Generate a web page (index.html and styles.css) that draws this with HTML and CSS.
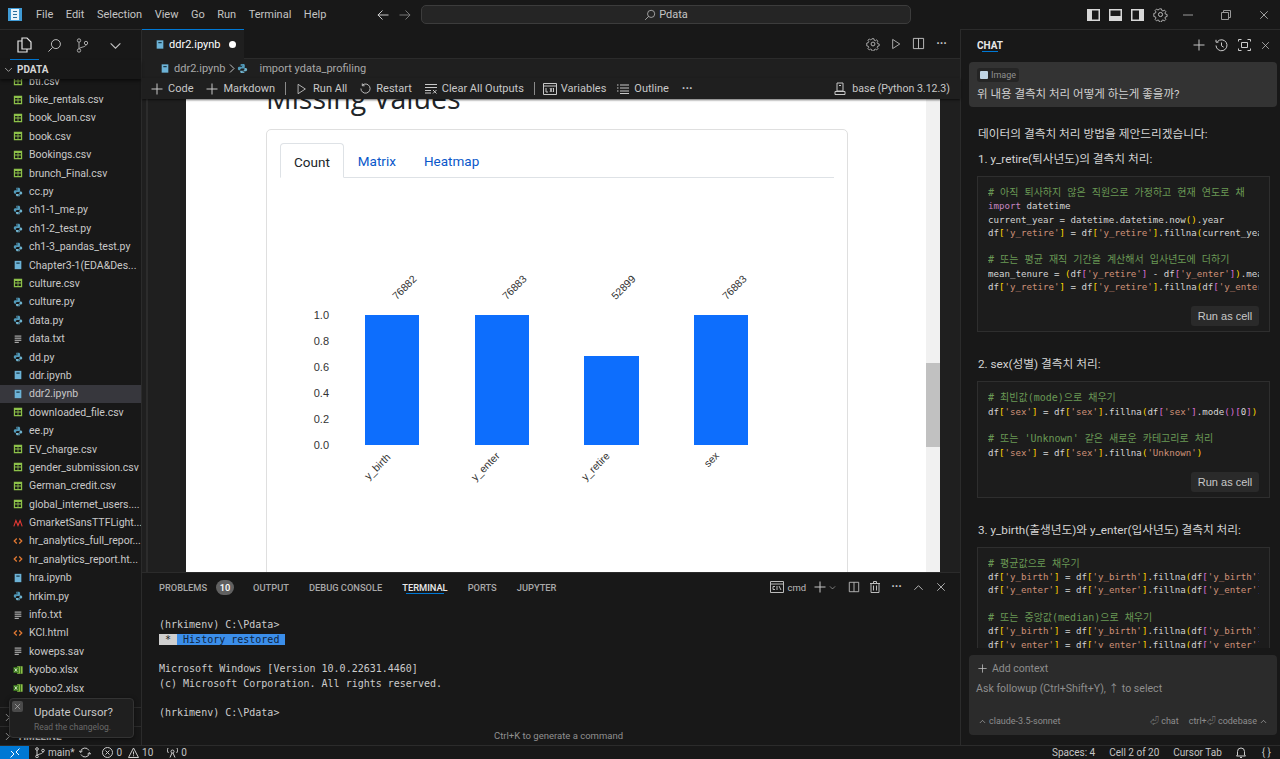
FILE: index.html
```html
<!DOCTYPE html>
<html>
<head>
<meta charset="utf-8">
<title>ddr2.ipynb - Pdata</title>
<link rel="stylesheet" href="styles.css">
</head>
<body>
<svg class="defs" width="0" height="0">
	<symbol id="csv" viewBox="0 0 12 12"><path fill="#8dc149" fill-rule="evenodd" d="M1 1h10v10H1zM2.500 3.500v2h3v-2zM6.500 3.500v2h3v-2zM2.500 6.500v3h3v-3zM6.500 6.500v3h3v-3z"/></symbol>
	<symbol id="py" viewBox="0 0 12 12"><path fill="#519aba" d="M4 1h3.500L8.500 2v3l-1 1H4.500l-1 1v1H2L1 7V5l1-1h3.500v-.6H4zM5 1.800v.8h.8v-.8z"/><path fill="#6fb3cf" d="M8 11H4.500l-1-1V8.500h3.500l1-1V5.500H10l1 1v1.500l-1 1H6.500v.6H8zM7 10.200v-.8h-.8v.8z"/></symbol>
	<symbol id="nb" viewBox="0 0 12 12"><path fill="#6cb2d6" d="M2 1h8v10H2z"/><path fill="#1a3a4a" d="M4 3h4v1.500H4z"/></symbol>
	<symbol id="txt" viewBox="0 0 12 12"><path stroke="#c5c5c5" stroke-width="1.200" d="M2 2.500h8M2 5h8M2 7.500h8M2 10h5" fill="none"/></symbol>
	<symbol id="html" viewBox="0 0 12 12"><path stroke="#e37933" stroke-width="1.500" d="M4.500 3 1.500 6l3 3M7.500 3l3 3-3 3" fill="none"/></symbol>
	<symbol id="xls" viewBox="0 0 12 12"><path fill="#8dc149" d="M5 1.500h6.500v9H5z"/><path fill="#3c7a1e" d="M.5 2.500h6.500v7H.5z"/><path stroke="#e8f5d8" d="m2 4 3 4M5 4 2 8" fill="none"/><path stroke="#2d5c16" d="M9 1.500v9" fill="none"/></symbol>
	<symbol id="font" viewBox="0 0 12 12"><path stroke="#e53935" stroke-width="1.300" d="M1 10 3.500 3 6 9l2.500-6 2.500 7" fill="none"/></symbol>
	<symbol id="plus" viewBox="0 0 12 12"><path stroke="currentColor" d="M6 .5v11M.5 6h11" fill="none"/></symbol>
	<symbol id="close" viewBox="0 0 12 12"><path stroke="currentColor" d="m1.500 1.500 9 9M10.500 1.500l-9 9" fill="none"/></symbol>
	<symbol id="down" viewBox="0 0 12 12"><path stroke="currentColor" d="m1.500 4 4.500 4.500L10.500 4" fill="none"/></symbol>
	<symbol id="up" viewBox="0 0 12 12"><path stroke="currentColor" d="M1.500 8.500 6 4l4.500 4.500" fill="none"/></symbol>
	<symbol id="right" viewBox="0 0 12 12"><path stroke="currentColor" d="m4 1.500 4.500 4.500L4 10.500" fill="none"/></symbol>
	<symbol id="gear" viewBox="0 0 16 16"><g stroke="currentColor" fill="none"><circle cx="8" cy="8" r="2.200"/><path d="M6.800 1.500h2.400l.4 1.900 1.300.6 1.700-1 1.600 1.600-1 1.700.6 1.300 1.900.4v2.400l-1.900.4-.6 1.300 1 1.700-1.600 1.600-1.700-1-1.300.6-.4 1.900H6.800l-.4-1.900-1.300-.6-1.700 1-1.600-1.600 1-1.700-.6-1.300-1.900-.4V6.800l1.900-.4.6-1.300-1-1.700 1.600-1.600 1.700 1 1.300-.6z" transform="translate(.6 .6) scale(.92)"/></g></symbol>
	<symbol id="split" viewBox="0 0 14 14"><path stroke="currentColor" d="M1.500 1.500h11v11h-11zM7 1.500v11" fill="none"/></symbol>
	<symbol id="search" viewBox="0 0 16 16"><circle cx="9.500" cy="6.500" r="4.800" stroke="currentColor" fill="none"/><path stroke="currentColor" d="M6 10 1.500 14.500" fill="none"/></symbol>
	<symbol id="play" viewBox="0 0 12 14"><path stroke="currentColor" d="M2 1.500 10.500 7 2 12.500z" fill="none"/></symbol>
</svg>

<div class="app">
	<div class="titlebar">
		<svg class="logo" width="14" height="13" viewBox="0 0 14 13"><path fill="#3f9bd6" d="M0 0h14v13H0z"/><path fill="#e8f3fa" d="M3 1h8v11H3z"/><path fill="#2a6f9e" d="M5 3h4v1H5zM5 6h4v1H5zM5 9h4v1H5z"/></svg>
		<div class="menu">
			<span>File</span><span>Edit</span><span>Selection</span><span>View</span><span>Go</span><span>Run</span><span>Terminal</span><span>Help</span>
		</div>
		<div class="nav">
			<svg width="12" height="12" viewBox="0 0 12 12"><path stroke="#c8c8c8" d="M11.500 6H.8M5.500 1.500 1 6l4.500 4.500" fill="none"/></svg>
			<svg width="12" height="12" viewBox="0 0 12 12"><path stroke="#777" d="M.5 6h10.700M6.500 1.500 11 6l-4.500 4.500" fill="none"/></svg>
		</div>
		<div class="search-box">
			<svg class="ico" width="12" height="12"><use href="#search"/></svg>
			<span>Pdata</span>
		</div>
		<div class="layout-icons">
			<svg width="13" height="12" viewBox="0 0 13 12"><path fill="#d8d8d8" d="M0 0h13v12H0z"/><path fill="#1a1a1a" d="M5 1.500h6.500v9H5z"/></svg>
			<svg width="13" height="12" viewBox="0 0 13 12"><path fill="#d8d8d8" d="M0 0h13v12H0z"/><path fill="#1a1a1a" d="M1.500 1.500h10V7h-10z"/></svg>
			<svg width="13" height="12" viewBox="0 0 13 12"><path fill="#d8d8d8" d="M0 0h13v12H0z"/><path fill="#1a1a1a" d="M1.500 1.500H8v9H1.500z"/></svg>
			<svg class="ico" width="15" height="15"><use href="#gear"/></svg>
		</div>
		<div class="win-buttons">
			<svg width="10" height="10" viewBox="0 0 10 10"><path stroke="#999" d="M0 5h10" fill="none"/></svg>
			<svg width="10" height="10" viewBox="0 0 10 10"><path stroke="#999" d="M.5 2.500h7v7h-7zM2.500 2.500v-2h7v7h-2" fill="none"/></svg>
			<svg class="win-x" width="10" height="10"><use href="#close"/></svg>
		</div>
	</div>

	<div class="main">
		<div class="sidebar">
			<div class="side-tabs">
				<span class="side-active"><svg width="15" height="16" viewBox="0 0 15 16"><path stroke="#e6e6e6" stroke-width="1.200" d="M5 1h5l4 4v7H5zM5 4H1v11h9v-3" fill="none"/></svg></span>
				<svg class="ico" width="15" height="15"><use href="#search"/></svg>
				<svg width="13" height="15" viewBox="0 0 13 15"><g stroke="#aaa" fill="none"><circle cx="3" cy="2.500" r="1.700"/><circle cx="3" cy="12.500" r="1.700"/><circle cx="10" cy="5" r="1.700"/><path d="M3 4.200v6.600M10 6.700c0 2.500-5 2-7 4"/></g></svg>
				<svg class="ico side-more" width="13" height="13"><use href="#down"/></svg>
			</div>
			<div class="explorer-head"><svg class="ico" width="9" height="9"><use href="#down"/></svg><b>PDATA</b></div>
			<div class="tree">
				<ul class="files">
					<li><svg><use href="#csv"/></svg>bti.csv</li>
					<li><svg><use href="#csv"/></svg>bike_rentals.csv</li>
					<li><svg><use href="#csv"/></svg>book_loan.csv</li>
					<li><svg><use href="#csv"/></svg>book.csv</li>
					<li><svg><use href="#csv"/></svg>Bookings.csv</li>
					<li><svg><use href="#csv"/></svg>brunch_Final.csv</li>
					<li><svg><use href="#py"/></svg>cc.py</li>
					<li><svg><use href="#py"/></svg>ch1-1_me.py</li>
					<li><svg><use href="#py"/></svg>ch1-2_test.py</li>
					<li><svg><use href="#py"/></svg>ch1-3_pandas_test.py</li>
					<li><svg><use href="#nb"/></svg>Chapter3-1(EDA&amp;Des...</li>
					<li><svg><use href="#csv"/></svg>culture.csv</li>
					<li><svg><use href="#py"/></svg>culture.py</li>
					<li><svg><use href="#py"/></svg>data.py</li>
					<li><svg><use href="#txt"/></svg>data.txt</li>
					<li><svg><use href="#py"/></svg>dd.py</li>
					<li><svg><use href="#nb"/></svg>ddr.ipynb</li>
					<li class="selected"><svg><use href="#nb"/></svg>ddr2.ipynb</li>
					<li><svg><use href="#csv"/></svg>downloaded_file.csv</li>
					<li><svg><use href="#py"/></svg>ee.py</li>
					<li><svg><use href="#csv"/></svg>EV_charge.csv</li>
					<li><svg><use href="#csv"/></svg>gender_submission.csv</li>
					<li><svg><use href="#csv"/></svg>German_credit.csv</li>
					<li><svg><use href="#csv"/></svg>global_internet_users....</li>
					<li><svg><use href="#font"/></svg>GmarketSansTTFLight...</li>
					<li><svg><use href="#html"/></svg>hr_analytics_full_repor...</li>
					<li><svg><use href="#html"/></svg>hr_analytics_report.ht...</li>
					<li><svg><use href="#nb"/></svg>hra.ipynb</li>
					<li><svg><use href="#py"/></svg>hrkim.py</li>
					<li><svg><use href="#txt"/></svg>info.txt</li>
					<li><svg><use href="#html"/></svg>KCl.html</li>
					<li><svg><use href="#txt"/></svg>koweps.sav</li>
					<li><svg><use href="#xls"/></svg>kyobo.xlsx</li>
					<li><svg><use href="#xls"/></svg>kyobo2.xlsx</li>
				</ul>
			</div>
			<div class="side-section"><svg class="ico" width="9" height="9"><use href="#right"/></svg>OUTLINE</div>
			<div class="side-section"><svg class="ico" width="9" height="9"><use href="#right"/></svg>TIMELINE</div>
		</div>

		<div class="editor">
			<div class="tabbar">
				<div class="tab">
					<svg width="10" height="11"><use href="#nb"/></svg>
					<span>ddr2.ipynb</span>
					<i class="dirty"></i>
				</div>
				<div class="tab-actions">
					<svg class="ico" width="14" height="14"><use href="#gear"/></svg>
					<svg class="ico" width="10" height="12"><use href="#play"/></svg>
					<svg class="ico" width="13" height="13"><use href="#split"/></svg>
					<span class="dots">···</span>
				</div>
			</div>
			<div class="breadcrumb">
				<svg width="10" height="11"><use href="#nb"/></svg>
				<span>ddr2.ipynb</span>
				<svg class="ico crumb-sep" width="6" height="9" viewBox="0 0 6 9"><path stroke="currentColor" d="m1 .5 4 4-4 4" fill="none"/></svg>
				<svg class="crumb-py" width="11" height="11"><use href="#py"/></svg>
				<span>import ydata_profiling</span>
			</div>
			<div class="toolbar">
				<span class="tool tool-code"><svg width="12" height="12"><use href="#plus"/></svg>Code</span>
				<span class="tool tool-md"><svg width="12" height="12"><use href="#plus"/></svg>Markdown</span>
				<i class="tool-sep"></i>
				<span class="tool tool-run"><svg width="11" height="12"><use href="#play"/></svg>Run All</span>
				<span class="tool tool-restart"><svg width="11" height="11" viewBox="0 0 12 12"><path stroke="currentColor" d="M2.500 2.500A5 5 0 1 1 1 6M2.500.5v2.500H5" fill="none"/></svg>Restart</span>
				<span class="tool tool-clear"><svg width="12" height="11" viewBox="0 0 12 11"><path stroke="currentColor" d="M0 1.500h12M0 4.500h12M0 7.500h6M0 10h6M8 7l3.500 3.500M11.500 7 8 10.500" fill="none"/></svg>Clear All Outputs</span>
				<i class="tool-sep tool-sep2"></i>
				<span class="tool tool-vars"><svg width="14" height="12" viewBox="0 0 14 12"><path stroke="currentColor" d="M.5.500h13v11H.5zM.5 3h13" fill="none"/><path stroke="currentColor" d="M3 5v4h2M7 5l2 4M9 5 7 9M10.500 5v4" fill="none"/></svg>Variables</span>
				<span class="tool tool-outline"><svg width="12" height="10" viewBox="0 0 12 10"><path stroke="currentColor" d="M3 1h9M3 4h9M3 7h9M3 9.500h9M0 1h1.500M0 4h1.500M0 7h1.500" fill="none"/></svg>Outline</span>
				<span class="dots">···</span>
				<span class="kernel"><svg width="12" height="13" viewBox="0 0 12 13"><path stroke="currentColor" fill="none" d="M3 1h6v8H3zM1 12.500h10v-3H1zM5 3.500h2"/></svg>base (Python 3.12.3)</span>
			</div>
			<div class="notebook">
				<div class="gutter"></div>
				<div class="output">
					<div class="report">
						<h1>Missing Values</h1>
						<div class="card">
							<div class="card-tabs">
								<a class="on">Count</a>
								<a>Matrix</a>
								<a>Heatmap</a>
							</div>
							<svg class="chart" width="580" height="400">
								<g fill="#0d6efd">
									<rect x="98" y="137" width="54" height="130"/>
									<rect x="208" y="137" width="54" height="130"/>
									<rect x="317" y="178" width="55" height="89"/>
									<rect x="427" y="137" width="54" height="130"/>
								</g>
								<g class="ticks">
									<text x="62" y="141">1.0</text>
									<text x="62" y="167">0.8</text>
									<text x="62" y="193">0.6</text>
									<text x="62" y="219">0.4</text>
									<text x="62" y="245">0.2</text>
									<text x="62" y="271">0.0</text>
								</g>
								<g class="bar-labels">
									<text transform="translate(140 112) rotate(-45)">76882</text>
									<text transform="translate(250 112) rotate(-45)">76883</text>
									<text transform="translate(359 112) rotate(-45)">52899</text>
									<text transform="translate(470 112) rotate(-45)">76883</text>
									<text transform="translate(113 291) rotate(-45)">y_birth</text>
									<text transform="translate(221 291) rotate(-45)">y_enter</text>
									<text transform="translate(331 291) rotate(-45)">y_retire</text>
									<text transform="translate(447 284) rotate(-45)">sex</text>
								</g>
							</svg>
						</div>
					</div>
					<div class="scrollbar"><div class="thumb"></div></div>
				</div>
				<div class="right-gap"></div>
			</div>
			<div class="panel">
				<div class="panel-tabs">
					<span>PROBLEMS</span><em class="badge">10</em>
					<span class="pt-output">OUTPUT</span>
					<span>DEBUG CONSOLE</span>
					<span class="on">TERMINAL</span>
					<span>PORTS</span>
					<span>JUPYTER</span>
					<div class="panel-actions">
						<svg width="14" height="12" viewBox="0 0 14 12"><path stroke="#bbb" d="M.5.500h13v11H.5zM.5 3h13" fill="none"/><path stroke="#bbb" d="M5 5.500H3v3h2M7 5v4M9 5l2 4" fill="none"/></svg>
						<span class="cmd">cmd</span>
						<svg class="ico pa-plus" width="12" height="12"><use href="#plus"/></svg>
						<svg class="ico pa-down" width="7" height="7"><use href="#down"/></svg>
						<svg class="ico pa-split" width="12" height="12"><use href="#split"/></svg>
						<svg class="pa-trash" width="10" height="12" viewBox="0 0 10 12"><path stroke="#bbb" fill="none" d="M1 2.500h8v9H1zM0 2.500h10M3.500 2.500V.5h3v2M3.500 4.500v5M6.500 4.500v5"/></svg>
						<span class="dots pa-dots">···</span>
						<svg class="ico pa-up" width="11" height="11"><use href="#up"/></svg>
						<svg class="ico pa-x" width="10" height="10"><use href="#close"/></svg>
					</div>
				</div>
				<pre class="terminal">(hrkimenv) C:\Pdata&gt;
<span class="restored"><span class="star"> * </span><span class="hist"> History restored </span></span>

Microsoft Windows [Version 10.0.22631.4460]
(c) Microsoft Corporation. All rights reserved.

(hrkimenv) C:\Pdata&gt;</pre>
				<div class="term-hint">Ctrl+K to generate a command</div>
			</div>
		</div>

		<div class="chat">
			<div class="chat-head">
				<span class="chat-title">CHAT</span>
				<div class="chat-actions">
					<svg class="ico" width="12" height="12"><use href="#plus"/></svg>
					<svg width="13" height="13" viewBox="0 0 13 13"><path stroke="#ccc" fill="none" d="M2.500 2.500a5.500 5.500 0 1 1-1.500 4M1 .8v2.400h2.400M6.500 3.500v3.300l2.200 1.400"/></svg>
					<svg width="13" height="12" viewBox="0 0 13 12"><path stroke="#ccc" fill="none" d="M3.500 3.500h6v5h-6zM.5 2.500v-2h3M9.500.5h3v2M.5 9.500v2h3M9.500 11.500h3v-2"/></svg>
					<svg class="ico" width="9" height="9"><use href="#close"/></svg>
				</div>
			</div>
			<div class="chat-scroll">
				<div class="user-msg">
					<span class="chip"><i></i>Image</span>
					<p>위 내용 결측치 처리 어떻게 하는게 좋을까?</p>
				</div>
				<p class="para intro">데이터의 결측치 처리 방법을 제안드리겠습니다:</p>
				<p class="para">1. y_retire(퇴사년도)의 결측치 처리:</p>
				<div class="code">
<pre><span class="c"># 아직 퇴사하지 않은 직원으로 가정하고 현재 연도로 채</span>
<span class="k">import</span> datetime
current_year = datetime.datetime.now<span class="b">()</span>.year
df<span class="b">[</span><span class="s">'y_retire'</span><span class="b">]</span> = df<span class="b">[</span><span class="s">'y_retire'</span><span class="b">]</span>.fillna<span class="b">(</span>current_year<span class="b">)</span>

<span class="c"># 또는 평균 재직 기간을 계산해서 입사년도에 더하기</span>
mean_tenure = <span class="b">(</span>df<span class="p">[</span><span class="s">'y_retire'</span><span class="p">]</span> - df<span class="p">[</span><span class="s">'y_enter'</span><span class="p">]</span><span class="b">)</span>.mean<span class="b">()</span>
df<span class="b">[</span><span class="s">'y_retire'</span><span class="b">]</span> = df<span class="b">[</span><span class="s">'y_retire'</span><span class="b">]</span>.fillna<span class="b">(</span>df<span class="p">[</span><span class="s">'y_enter'</span><span class="p">]</span><span class="b">)</span></pre>
					<button class="run-cell">Run as cell</button>
				</div>
				<p class="para after-code">2. sex(성별) 결측치 처리:</p>
				<div class="code">
<pre><span class="c"># 최빈값(mode)으로 채우기</span>
df<span class="b">[</span><span class="s">'sex'</span><span class="b">]</span> = df<span class="b">[</span><span class="s">'sex'</span><span class="b">]</span>.fillna<span class="b">(</span>df<span class="p">[</span><span class="s">'sex'</span><span class="p">]</span>.mode<span class="p">()[</span>0<span class="p">]</span><span class="b">)</span>

<span class="c"># 또는 'Unknown' 같은 새로운 카테고리로 처리</span>
df<span class="b">[</span><span class="s">'sex'</span><span class="b">]</span> = df<span class="b">[</span><span class="s">'sex'</span><span class="b">]</span>.fillna<span class="b">(</span><span class="s">'Unknown'</span><span class="b">)</span></pre>
					<button class="run-cell">Run as cell</button>
				</div>
				<p class="para after-code">3. y_birth(출생년도)와 y_enter(입사년도) 결측치 처리:</p>
				<div class="code">
<pre><span class="c"># 평균값으로 채우기</span>
df<span class="b">[</span><span class="s">'y_birth'</span><span class="b">]</span> = df<span class="b">[</span><span class="s">'y_birth'</span><span class="b">]</span>.fillna<span class="b">(</span>df<span class="p">[</span><span class="s">'y_birth'</span><span class="p">]</span><span class="b">)</span>
df<span class="b">[</span><span class="s">'y_enter'</span><span class="b">]</span> = df<span class="b">[</span><span class="s">'y_enter'</span><span class="b">]</span>.fillna<span class="b">(</span>df<span class="p">[</span><span class="s">'y_enter'</span><span class="p">]</span><span class="b">)</span>

<span class="c"># 또는 중앙값(median)으로 채우기</span>
df<span class="b">[</span><span class="s">'y_birth'</span><span class="b">]</span> = df<span class="b">[</span><span class="s">'y_birth'</span><span class="b">]</span>.fillna<span class="b">(</span>df<span class="p">[</span><span class="s">'y_birth'</span><span class="p">]</span><span class="b">)</span>
df<span class="b">[</span><span class="s">'y_enter'</span><span class="b">]</span> = df<span class="b">[</span><span class="s">'y_enter'</span><span class="b">]</span>.fillna<span class="b">(</span>df<span class="p">[</span><span class="s">'y_enter'</span><span class="p">]</span><span class="b">)</span></pre>
				</div>
			</div>
			<div class="chat-input">
				<div class="add-context"><svg class="ico" width="9" height="9"><use href="#plus"/></svg>Add context</div>
				<div class="placeholder">Ask followup (Ctrl+Shift+Y), ↑ to select</div>
				<div class="input-foot">
					<span><svg class="ico" width="7" height="7"><use href="#up"/></svg>claude-3.5-sonnet</span>
					<span class="foot-right">⏎ chat<b>ctrl+⏎ codebase</b><svg class="ico" width="7" height="7"><use href="#up"/></svg></span>
				</div>
			</div>
		</div>
	</div>

	<div class="statusbar">
		<span class="remote"><svg width="10" height="10" viewBox="0 0 10 10"><path stroke="#fff" d="M.5 9.500 4 6 1 3M9.500.500 6 4l3 3" fill="none"/></svg></span>
		<span class="st st-branch"><svg width="10" height="11" viewBox="0 0 10 11"><g stroke="#ccc" fill="none"><circle cx="2" cy="2" r="1.300"/><circle cx="2" cy="9.500" r="1.300"/><circle cx="8" cy="3.500" r="1.300"/><path d="M2 3.300v5M8 4.800c0 2-4 2-6 3.500"/></g></svg>main*</span>
		<svg class="st-sync" width="12" height="11" viewBox="0 0 12 11"><path stroke="#ccc" fill="none" d="M1.500 5A4.500 4.500 0 0 1 10 3.500M10.500 6A4.500 4.500 0 0 1 2 7.500M0 3.500 1.500 5.500 3.500 4M12 7.500 10.500 5.500 8.500 7"/></svg>
		<span class="st st-err"><svg width="11" height="11" viewBox="0 0 11 11"><g stroke="#ccc" fill="none"><circle cx="5.500" cy="5.500" r="5"/><path d="m3.500 3.500 4 4M7.500 3.500l-4 4"/></g></svg>0<svg class="st-warn" width="11" height="11" viewBox="0 0 11 11"><path stroke="#ccc" fill="none" d="M5.500 1 10.500 10.500H.5zM5.500 4.500v3M5.500 8.300v1"/></svg>10</span>
		<span class="st st-ports"><svg width="11" height="11" viewBox="0 0 11 11"><g stroke="#ccc" fill="none"><circle cx="5.500" cy="4.500" r="1.500"/><path d="M1 1c-1 2-.5 4 .5 5M10 1c1 2 .5 4-.5 5M5 6l-2 4.500M6 6l2 4.500"/></g></svg>0</span>
		<div class="status-right">
			<span>Spaces: 4</span>
			<span>Cell 2 of 20</span>
			<span>Cursor Tab</span>
			<svg class="st-bell" width="10" height="11" viewBox="0 0 10 11"><path stroke="#ccc" fill="none" d="M1.500 8V4.500a3.500 3.500 0 0 1 7 0V8l1 1H.5zM4 10.500h2"/></svg>
			<span class="braces">{ }</span>
		</div>
	</div>

	<div class="toast">
		<span class="toast-x"><svg class="ico" width="7" height="7"><use href="#close"/></svg></span>
		<div class="toast-body">
			<div class="toast-title">Update Cursor?</div>
			<div class="toast-sub">Read the changelog.</div>
		</div>
	</div>
</div>
</body>
</html>
```

FILE: styles.css
```css
*{
	margin:0;
	padding:0;
	box-sizing:border-box;
}
html,body{
	background:#181818;
	overflow:hidden;
}
.defs{
	position:absolute;
}
svg{
	display:block;
	flex:none;
}
.ico{
	color:#c4c4c4;
}
.dots{
	color:#c4c4c4;
	font-size:12px;
	font-weight:700;
}
.app{
	position:relative;
	width:1280px;
	height:759px;
	display:flex;
	flex-direction:column;
	font-family:Roboto,"Noto Sans CJK KR",sans-serif;
	font-size:11px;
	color:#cccccc;
}

/* title bar */
.titlebar{
	height:29px;
	display:flex;
	align-items:center;
	background:#181818;
	padding-left:8px;
}
.menu{
	display:flex;
	gap:12.500px;
	margin-left:14px;
	width:325px;
	color:#c4c4c4;
}
.nav{
	display:flex;
	gap:10px;
	margin-left:16px;
}
.search-box{
	width:490px;
	height:19px;
	margin-left:10px;
	display:flex;
	align-items:center;
	justify-content:center;
	gap:3px;
	background:#252525;
	border:1px solid #3c3c3c;
	border-radius:5px;
	color:#c4c4c4;
}
.layout-icons{
	display:flex;
	align-items:center;
	gap:9px;
	margin-left:176px;
}
.win-buttons{
	display:flex;
	align-items:center;
	gap:28px;
	margin-left:15px;
}
.win-x{
	color:#bbb;
}

/* main columns */
.main{
	flex:1;
	display:flex;
	min-height:0;
}
.sidebar{
	width:142px;
	display:flex;
	flex-direction:column;
	background:#181818;
	border-right:1px solid #2b2b2b;
	border-top:1px solid #2b2b2b;
}
.side-tabs{
	height:30px;
	display:flex;
	align-items:center;
	gap:14px;
	padding-left:10px;
}
.side-active{
	height:30px;
	display:flex;
	align-items:center;
	padding:0 7px;
	margin-right:-6px;
	border-bottom:1px solid #0078d4;
}
.side-more{
	margin-left:6px;
}
.explorer-head{
	height:19px;
	display:flex;
	align-items:center;
	gap:4px;
	padding-left:4px;
	color:#d6d6d6;
	font-size:10px;
	box-shadow:0 2px 3px rgba(0,0,0,.5);
	position:relative;
}
.tree{
	flex:1;
	overflow:hidden;
	min-height:0;
}
.files{
	list-style:none;
	margin-top:-7px;
}
.files li{
	height:18.400px;
	display:flex;
	align-items:center;
	gap:6px;
	padding-left:13px;
	white-space:nowrap;
	font-size:10.500px;
	color:#c8c8c8;
}
.files svg{
	width:10px;
	height:10px;
}
.files .selected{
	background:#37373d;
}
.side-section{
	height:19px;
	display:flex;
	align-items:center;
	gap:5px;
	border-top:1px solid #2b2b2b;
	padding-left:3px;
	font-size:10px;
	font-weight:700;
}

/* editor */
.editor{
	width:818px;
	display:flex;
	flex-direction:column;
	min-width:0;
}
.tabbar{
	height:30px;
	display:flex;
	align-items:center;
	justify-content:space-between;
	background:#181818;
	border-bottom:1px solid #2b2b2b;
}
.tab{
	width:102px;
	height:30px;
	display:flex;
	align-items:center;
	gap:4px;
	padding-left:13px;
	background:#1f1f1f;
	border-top:1px solid #0078d4;
	color:#ffffff;
}
.dirty{
	width:7px;
	height:7px;
	border-radius:50%;
	background:#fff;
	margin-left:5px;
}
.tab-actions{
	display:flex;
	align-items:center;
	gap:11px;
	padding-right:13px;
}
.breadcrumb{
	height:19px;
	display:flex;
	align-items:center;
	gap:4px;
	padding-left:18px;
	background:#1f1f1f;
	color:#a8a8a8;
}
.crumb-sep{
	margin:0 -2px 0 0;
}
.crumb-py{
	margin-right:7px;
}
.toolbar{
	height:21px;
	display:flex;
	align-items:center;
	background:#1f1f1f;
	padding-left:9px;
	color:#c8c8c8;
	position:relative;
	box-shadow:0 1px 2px rgba(0,0,0,.6);
}
.tool{
	display:flex;
	align-items:center;
	gap:5px;
	white-space:nowrap;
}
.tool svg{
	color:#c8c8c8;
}
.tool-md{
	margin-left:13px;
}
.tool-sep{
	width:1px;
	height:13px;
	background:#8a8a8a;
	margin-left:10px;
}
.tool-run{
	margin-left:10px;
	gap:6px;
}
.tool-restart{
	margin-left:13px;
}
.tool-clear{
	margin-left:13px;
}
.tool-vars{
	margin-left:8px;
	gap:4px;
}
.tool-outline{
	margin-left:11px;
}
.toolbar .dots{
	margin-left:13px;
}
.kernel{
	display:flex;
	align-items:center;
	gap:6px;
	margin-left:auto;
	padding-right:10px;
	font-size:10.600px;
}
.notebook{
	flex:1;
	display:flex;
	min-height:0;
	overflow:hidden;
	background:#1f1f1f;
}
.gutter{
	width:44px;
	border-left:4px solid #1f1f1f;
	background:linear-gradient(to right,#2c2c2c 2px,#1f1f1f 2px);
}
.output{
	width:754px;
	display:flex;
	background:#fff;
}
.report{
	flex:1;
	padding:0 78px 0 80px;
	min-width:0;
}
.report h1{
	font-family:"Open Sans",sans-serif;
	font-weight:400;
	font-size:28.500px;
	line-height:38px;
	margin-top:-20px;
	color:#212529;
	white-space:nowrap;
}
.card{
	margin-top:12px;
	border:1px solid #dfdfdf;
	border-radius:5px;
	padding:13px 13px 0;
	height:600px;
}
.card-tabs{
	display:flex;
	height:35px;
	border-bottom:1px solid #dee2e6;
	font-size:13.500px;
}
.card-tabs a{
	padding:0 14px;
	line-height:36px;
	color:#0a58ca;
	white-space:nowrap;
}
.card-tabs .on{
	color:#212529;
	background:#fff;
	border:1px solid #dee2e6;
	border-bottom:1px solid #fff;
	border-radius:4px 4px 0 0;
	height:35px;
	padding:0 13px;
}
.chart{
	margin-left:-13px;
}
.ticks text{
	font:11px "Liberation Sans",sans-serif;
	fill:#333;
	text-anchor:end;
}
.bar-labels text{
	font:10.500px "Liberation Sans",sans-serif;
	fill:#333;
	text-anchor:middle;
}
.scrollbar{
	width:14px;
	background:#f1f1f1;
}
.thumb{
	height:84px;
	margin-top:264px;
	background:#c1c1c1;
}
.right-gap{
	flex:1;
	background:#1f1f1f;
}

/* bottom panel */
.panel{
	height:173px;
	display:flex;
	flex-direction:column;
	background:#181818;
	border-top:1px solid #2b2b2b;
	position:relative;
}
.panel-tabs{
	height:28px;
	display:flex;
	align-items:center;
	padding-left:17px;
	font-size:9.300px;
	font-weight:500;
	color:#a8a8a8;
	white-space:nowrap;
}
.panel-tabs>span{
	margin-right:20px;
}
.panel-tabs>span:first-child{
	margin-right:9px;
}
.panel-tabs .on{
	color:#e8e8e8;
	box-shadow:0 5px 0 -4px #0078d4;
}
.badge{
	width:18px;
	height:15px;
	line-height:15px;
	border-radius:8px;
	text-align:center;
	background:#616161;
	color:#fff;
	font-style:normal;
	margin-right:19px;
}
.panel-actions{
	margin-left:auto;
	display:flex;
	align-items:center;
	padding-right:14px;
}
.panel-tabs .cmd{
	font-weight:400;
	color:#bbb;
	margin:0 0 0 3px;
	font-size:9.500px;
}
.pa-plus{
	margin-left:8px;
}
.pa-down{
	margin-left:3px;
}
.pa-split{
	margin-left:12px;
}
.pa-trash{
	margin-left:10px;
}
.panel-tabs .pa-dots{
	margin:0 0 0 11px;
}
.pa-up{
	margin-left:11px;
}
.pa-x{
	margin-left:12px;
}
.terminal{
	padding:17px 0 0 17px;
	font-family:"DejaVu Sans Mono",monospace;
	font-size:10px;
	line-height:14.700px;
	color:#cccccc;
}
.star{
	background:#cfcfcf;
	color:#222;
}
.hist{
	background:#3b8eea;
	color:#10243d;
}
.term-hint{
	position:absolute;
	left:352px;
	bottom:4px;
	font-size:9.500px;
	color:#909090;
}

/* chat */
.chat{
	flex:1;
	display:flex;
	flex-direction:column;
	min-width:0;
	background:#181818;
	border-left:1px solid #2b2b2b;
	border-top:1px solid #2b2b2b;
}
.chat-head{
	height:30px;
	display:flex;
	align-items:center;
	justify-content:space-between;
	padding:0 10px 0 16px;
}
.chat-title{
	font-size:10px;
	font-weight:700;
	color:#e8e8e8;
	box-shadow:0 6px 0 -5px #0078d4;
}
.chat-actions{
	display:flex;
	align-items:center;
	gap:10px;
}
.chat-scroll{
	flex:1;
	min-height:0;
	overflow:hidden;
}
.user-msg{
	margin:2px 3px 0 8px;
	height:45px;
	padding:6px 8px;
	background:#333333;
	border-radius:4px;
	color:#d0d0d0;
}
.user-msg p{
	font-size:11.500px;
	line-height:16px;
	margin-top:4px;
}
.chip{
	display:inline-flex;
	align-items:center;
	gap:3px;
	height:14px;
	padding:0 3px;
	background:#252525;
	border-radius:3px;
	font-size:9px;
	color:#8f8f8f;
	vertical-align:top;
}
.chip i{
	width:8px;
	height:8px;
	background:#c0d4e4;
	border-radius:1px;
}
.para{
	margin:9px 0 9px 17px;
	font-size:11.700px;
	line-height:16px;
	color:#d4d4d4;
	white-space:nowrap;
}
.intro{
	margin-top:19px;
}
.after-code{
	margin-top:24px;
}
.code{
	margin:0 10px 0 16px;
	padding:9px 10px 5px;
	background:#1c1c1c;
	border:1px solid #2e2e2e;
	overflow:hidden;
}
.code pre{
	font-family:"DejaVu Sans Mono","Noto Sans CJK KR",monospace;
	font-size:9.150px;
	line-height:13.300px;
	color:#d4d4d4;
	overflow:hidden;
}
.code .c{
	color:#6a9955;
	font-size:10px;
}
.code .k{
	color:#c586c0;
}
.code .s{
	color:#ce9178;
}
.code .b{
	color:#ffd700;
}
.code .p{
	color:#da70d6;
}
.run-cell{
	display:block;
	margin:12px 0 0 auto;
	width:68px;
	height:20px;
	border:0;
	border-radius:3px;
	background:#2a2a2a;
	color:#c8c8c8;
	font:11px "Liberation Sans",sans-serif;
}
.chat-input{
	height:80px;
	margin:7px 3px 10px 8px;
	padding:6px 7px;
	background:#2b2b2b;
	border-radius:4px;
	display:flex;
	flex-direction:column;
	color:#8e8e8e;
	font-size:10.500px;
}
.add-context{
	display:flex;
	align-items:center;
	gap:5px;
	padding-left:2px;
	height:14px;
}
.placeholder{
	margin-top:6px;
	font-size:10.600px;
	line-height:16px;
	white-space:nowrap;
}
.input-foot{
	margin-top:auto;
	display:flex;
	justify-content:space-between;
	font-size:9px;
	line-height:12px;
	padding:0 3px 2px 3px;
}
.input-foot span{
	display:flex;
	align-items:center;
	gap:3px;
}
.foot-right b{
	font-weight:400;
	margin-left:7px;
}

/* status bar */
.statusbar{
	height:14px;
	display:flex;
	align-items:center;
	background:#181818;
	border-top:1px solid #2b2b2b;
	font-size:10px;
	color:#c4c4c4;
}
.remote{
	width:29px;
	height:14px;
	display:flex;
	align-items:center;
	justify-content:center;
	background:#0078d4;
}
.st{
	display:flex;
	align-items:center;
	gap:3px;
}
.st-branch{
	margin-left:6px;
}
.st-sync{
	margin-left:5px;
}
.st-err{
	margin-left:11px;
}
.st-warn{
	margin-left:3px;
}
.st-ports{
	margin-left:14px;
}
.status-right{
	margin-left:auto;
	display:flex;
	align-items:center;
	gap:14px;
	padding-right:9px;
}
.braces{
	margin-left:2px;
}

/* update notice, sits over the sidebar */
.toast{
	position:absolute;
	left:9px;
	top:698px;
	width:125px;
	height:40px;
	display:flex;
	background:#1f1f1f;
	border:1px solid #333;
	border-radius:4px;
	box-shadow:0 1px 4px rgba(0,0,0,.5);
}
.toast-x{
	width:11px;
	height:11px;
	margin:2px 0 0 2px;
	display:flex;
	align-items:center;
	justify-content:center;
	background:#4a4a4a;
	border-radius:2px;
}
.toast-body{
	margin-left:11px;
}
.toast-title{
	font-size:11.500px;
	line-height:14px;
	margin-top:6px;
	color:#c8c8c8;
}
.toast-sub{
	font-size:8.500px;
	line-height:12px;
	margin-top:2px;
	color:#6a6a6a;
}
```
